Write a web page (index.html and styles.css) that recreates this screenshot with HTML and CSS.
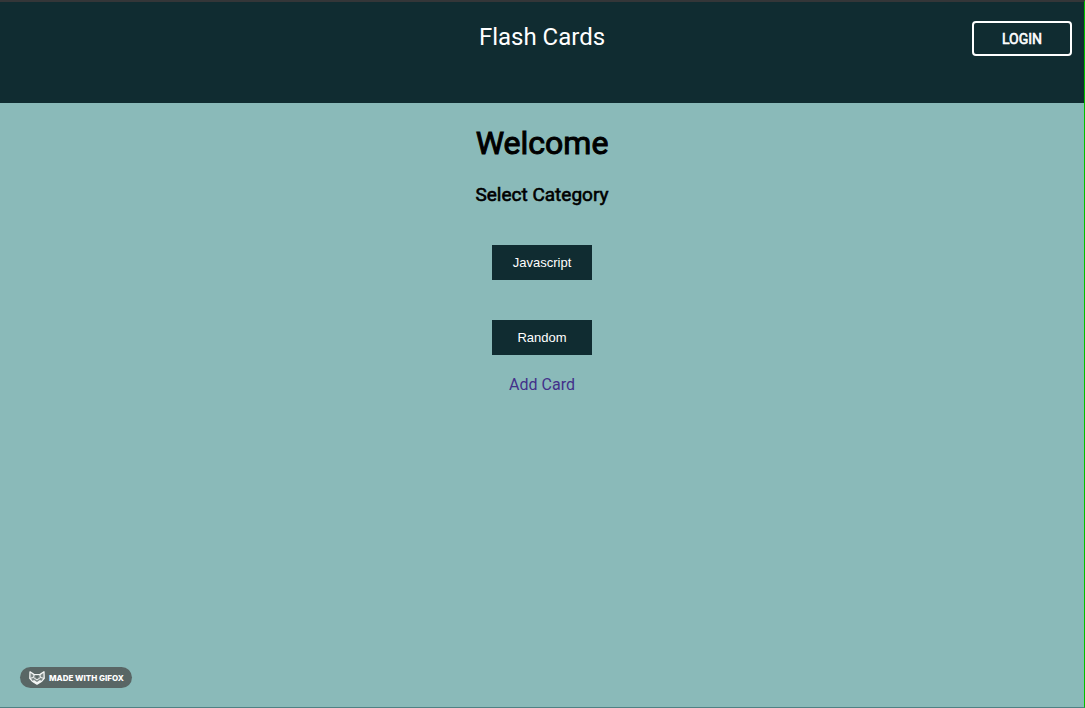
FILE: index.html
```html
<!DOCTYPE html>
<html lang="en">
<head>
<meta charset="utf-8">
<title>Flash Cards</title>
<link rel="stylesheet" href="styles.css">
</head>
<body>
<div class="app">
  <header class="header">
    <div class="brand">Flash Cards</div>
    <button class="login" type="button">LOGIN</button>
  </header>
  <main class="main">
    <h1 class="title">Welcome</h1>
    <h2 class="subtitle">Select Category</h2>
    <div class="categories">
      <button class="category" type="button">Javascript</button>
      <button class="category" type="button">Random</button>
    </div>
    <a class="add-card" href="#add">Add Card</a>
  </main>
  <footer class="footer">
    <div class="badge">
      <svg class="fox" viewBox="0 0 16 14" aria-hidden="true">
        <path d="M1 .8 5.200 3.600h5.600L15 .8l.2 6.600-2.400 2.800L8 13.200l-4.800-3L.8 7.400z" fill="#7d8887" stroke="#f4f6f5" stroke-width="1.300" stroke-linejoin="round"/>
        <path d="M1 7.400l3.500-1L8 9l3.500-2.600 3.500 1M5.200 3.600 4.500 6.400M10.800 3.600l.7 2.800" fill="none" stroke="#f4f6f5" stroke-width="1"/>
        <path d="M5.800 4.500h4.400L8 7.600z" fill="#596665"/>
        <path d="M3.200 10.200 5 9l3 2 3-2 1.800 1.200L8 13.200z" fill="#f4f6f5"/>
      </svg>
      <span>MADE WITH GIFOX</span>
    </div>
  </footer>
</div>
</body>
</html>
```
FILE: styles.css
```css
* {
  box-sizing: border-box;
}

body {
  margin: 0;
  font-family: Roboto, sans-serif;
  font-size: 16px;
  color: #000;
  background: #8abab9;
}

.app {
  display: flex;
  flex-direction: column;
  min-height: 100vh;
  border-top: 2px solid #343638;
  border-right: 1px solid #00c000;
  border-bottom: 1px solid #4f8184;
}

.header {
  display: grid;
  grid-template-columns: 1fr auto 1fr;
  align-items: start;
  height: 101px;
  padding: 19px 12px 0;
  background: #102c31;
  color: #fff;
}

.brand {
  grid-column: 2;
  font-size: 24px;
  line-height: 32px;
}

.login {
  justify-self: end;
  width: 100px;
  height: 35px;
  padding: 0;
  border: 2px solid #fff;
  border-radius: 4px;
  background: transparent;
  color: #fff;
  font: 400 14px/20px Roboto, sans-serif;
  -webkit-text-stroke: 0.6px #fff;
}

.main {
  flex: 1;
  display: flex;
  flex-direction: column;
  align-items: center;
  padding-top: 21px;
}

.title,
.subtitle {
  margin: 0;
  font-weight: 400;
  -webkit-text-stroke: 1px #000;
}

.title {
  font-size: 32px;
  line-height: 38px;
}

.subtitle {
  margin-top: 22px;
  font-size: 19px;
  line-height: 22px;
  -webkit-text-stroke-width: 0.6px;
}

.categories {
  display: grid;
  gap: 40px;
  margin-top: 39px;
}

.category {
  width: 100px;
  height: 35px;
  padding: 0;
  border: 0;
  background: #102c31;
  color: #fff;
  font: 13px "Liberation Sans", Arial, sans-serif;
}

.add-card {
  margin-top: 20px;
  line-height: 20px;
  color: #42308a;
  text-decoration: none;
}

.footer {
  display: flex;
  padding: 0 20px 19px;
}

.badge {
  display: flex;
  align-items: center;
  gap: 4px;
  height: 21px;
  padding: 0 8px 0 9px;
  border-radius: 11px;
  background: #596665;
  color: #fff;
  font-family: Inter, sans-serif;
  font-size: 8px;
  font-weight: 800;
}

.fox {
  width: 16px;
  height: 14px;
}
```
